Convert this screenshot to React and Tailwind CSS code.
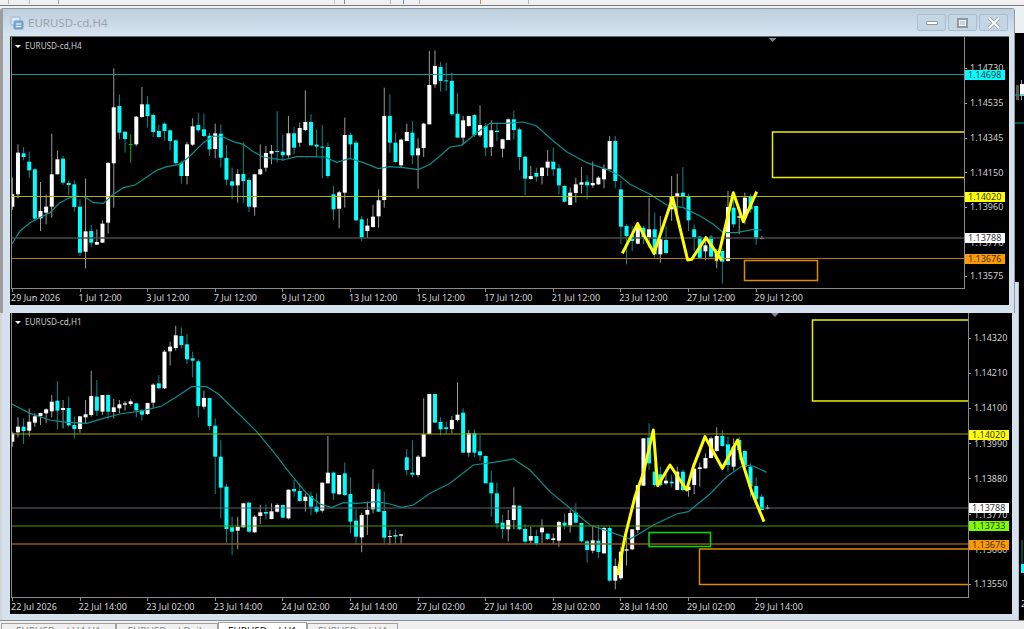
import React from "react";

// candle rows are read off the chart: kind + wickTop,bodyTop,bodyBottom,wickBottom
// values are 3x pixels relative to the y offset given to parseRows
const H4_ROWS = `
w350,400,437,447 w250,275,400,412 c258,277,288,298 c272,302,328,350 c322,325,473,478 w363,450,472,510
w400,437,455,490 w218,340,437,470 w268,295,340,340 c285,293,365,372 c358,366,372,402 c358,370,438,452
c415,437,575,585 w352,511,572,622 c492,510,545,558 w505,543,551,551 w478,488,545,545 w303,306,485,518
w22,139,307,440 c100,135,215,235 c212,212,234,275 g220,249,251,305 w165,167,250,255 w78,130,168,170
c105,130,165,200 c158,162,213,228 c192,210,228,232 c185,188,210,238 c205,208,240,268 c238,238,306,310
c300,305,345,368 w243,250,345,370 w172,196,251,255 c155,192,208,215 c158,205,225,228 c215,224,265,285
w188,217,264,292 c190,218,290,320 c252,291,356,372 c320,361,374,415 w325,339,373,425 c245,339,360,425
c350,357,437,453 w338,340,439,464 w250,325,340,342 w255,276,320,332 w252,270,278,310 c150,270,273,305
c222,272,283,300 w165,217,283,290 c198,217,260,280 w185,201,245,258 w88,183,207,210 c160,183,253,255
c205,251,257,290 c192,257,260,352 c245,258,345,352 c375,400,445,478 w390,394,443,502 w170,222,395,440
c215,222,250,290 c238,245,478,480 c465,475,530,540 w472,494,510,532 w432,467,498,500 w385,418,466,500
w80,165,417,440 c100,165,245,275 c215,245,303,305 w232,236,313,320 w188,213,240,240 c180,215,283,310
w232,262,283,383 w185,188,261,288 w-30,72,190,190 w-32,15,70,80 c3,18,60,92 c5,58,61,90
c35,60,160,165 c95,158,230,230 w165,178,230,250 w165,165,195,197 c160,162,222,228 w133,192,223,228
c185,195,260,285 w178,208,258,285 c188,209,213,240 w233,235,263,290 w172,175,237,237 c148,175,207,235
c200,205,288,328 c285,287,353,402 w315,345,354,356 c320,336,347,362 w318,320,345,370 w267,302,320,345
c260,302,325,345 c310,322,373,400 c373,375,422,425 w380,395,432,432 w350,370,396,425 w318,364,371,398
c343,362,373,415 w302,366,373,380 w345,350,370,372 w310,323,355,382 w225,240,325,325 c225,240,360,380
c360,385,497,550 c490,495,525,610 c495,522,540,570 w490,498,548,550 c495,500,528,550 w410,505,530,560
c455,505,580,590 w465,535,580,605 c495,537,576,580 w345,405,445,480 w338,397,407,480 c318,395,405,440
c398,408,478,510 c490,505,528,570 c525,527,590,595 w535,553,571,598 c522,527,587,590 w565,570,590,622
c562,570,602,668 w390,438,600,602 c395,440,490,500 w440,466,470,520 w395,410,470,490 c400,405,445,455
c435,435,533,552 w525,531,533,535`;

const H1_ROWS_A = `
w335,340,365,380 w292,320,337,352 c295,320,333,372 w265,305,332,350 w280,289,308,320 w278,279,288,315
w265,268,280,310 w225,245,274,292 c183,242,272,328 w240,264,270,325 c230,264,316,320 c290,315,327,355
w288,289,327,338 w240,283,292,310 w152,228,285,290 c180,230,272,288 w225,225,275,285 c225,225,275,298
w237,262,276,295 w240,253,265,280 w243,250,254,272 w238,244,252,258 c248,250,271,292 c268,271,284,302
w248,249,282,285 w190,194,248,262 c165,190,205,207 w90,95,205,207 w65,80,94,137 w17,46,84,92
c22,48,75,85 c42,73,118,132 c95,115,122,172 c118,124,258,292 w212,234,260,268 c233,234,318,330
c295,317,410,522 c360,410,503,595 c492,500,627,668 c590,622,635,705 w590,621,632,688 w548,550,622,622
c545,548,635,638 w585,590,637,638 w555,577,588,612 c553,576,581,598 w550,574,597,598 w550,555,575,578
c555,555,593,595 w508,509,595,598 c480,507,514,530 c490,513,543,545 w520,530,543,575 c515,528,560,585
c520,560,575,582 w487,488,572,578 w348,458,490,490 c455,458,520,540 w465,465,523,525 c427,460,525,528
c472,522,605,640 c568,602,650,675 w578,585,652,697 w545,570,584,645 w448,507,568,580 c490,508,575,576
c515,573,653,670 w630,648,651,675`;

const H1_ROWS_B = `
c478,495,500,522 w492,493,497,522 c237,262,300,316 c210,308,314,322 w255,260,315,322 w85,193,260,262
w72,72,192,192 c72,72,158,158 c142,156,178,196 c155,172,177,192 w138,150,177,190 w37,134,150,155
c115,128,248,248 w180,190,248,260 c178,190,248,262 c195,244,256,272 c256,258,340,340 c303,338,370,440
c338,370,460,475 c435,458,477,507 w420,450,478,515 w352,406,450,478 c407,407,478,480 c462,477,515,522
w470,498,512,522 c480,498,522,527 w448,473,487,522 c490,491,507,510 w490,505,510,522 w452,456,512,530
c430,458,467,478 w420,429,466,488 c400,428,458,460 c458,459,514,517 c510,514,540,578 w468,511,542,550
c465,512,546,565 w470,474,550,550 c470,474,632,635 w565,588,632,658 w530,545,625,630 w490,538,542,587
w478,478,538,540 w345,345,480,490 w205,205,347,347 c160,203,280,300 c280,305,345,350 c290,313,345,350
w310,332,340,345 c315,335,340,352 w290,305,360,360 c298,305,360,365 w330,350,360,380 w295,296,345,372
w278,292,297,350 w250,264,295,296 w200,205,264,265 w172,198,243,245 c180,198,228,230 c200,223,285,305
w205,230,290,302 c200,210,240,270 c240,243,290,295 c280,290,350,380 c322,348,388,392 c372,380,420,420
w405,413,416,418`;

const parseRows = (text, offsetY) =>
  text.trim().split(/\s+/).map((t) => {
    const [wt, bt, bb, wb] = t.slice(1).split(",").map((n) => offsetY + Number(n) / 3);
    return { kind: t[0], wt, bt, bb, wb };
  });

// zoomed points -> page coordinates
const pts = (list, ox, oy) => list.map(([x, y]) => `${ox + x / 3},${oy + y / 3}`).join(" ");

const H4_MA =
  pts([[5,550],[30,510],[60,485],[85,472],[120,455],[150,425],[175,412],[200,405],[225,408],[250,425],[280,427],[310,400],[340,380],[375,372],[405,352],[440,328],[470,317],[510,310],[540,285],[580,245],[610,225],[640,228],[670,242],[700,250],[730,272],[760,288],[790,293],[820,297],[860,287],[900,287],[945,288],[980,304],[1020,292],[1060,305],[1105,323],[1140,317]], 10, 60) +
  " " +
  pts([[40,320],[85,326],[120,310],[150,285],[180,258],[215,253],[260,215],[300,187],[340,187],[400,183],[440,195],[490,240],[530,272],[590,305],[650,325],[690,345],[720,370],[780,400],[830,432],[880,440],[930,465],[970,490],[1000,515],[1040,515],[1090,505],[1115,507]], 390, 60);

const H1_MA =
  pts([[5,252],[60,280],[120,300],[170,307],[230,310],[280,295],[330,282],[400,272],[455,258],[500,230],[545,200],[590,200],[625,222],[690,285],[740,335],[790,395],[840,460],[890,520],[930,552],[965,563],[1000,548],[1040,550],[1100,545],[1140,552]], 10, 320) +
  " " +
  pts([[35,412],[70,405],[120,370],[180,340],[250,285],[310,277],[370,267],[420,300],[480,365],[540,415],[600,465],[650,482],[720,507],[750,490],[790,465],[860,432],[895,425],[960,372],[1010,320],[1060,285],[1090,288],[1130,307]], 390, 370);

const CANDLE_COLORS = {
  w: { body: "#ffffff", wick: "#9a9a9a" },
  c: { body: "#00ffff", wick: "#0a8a8a" },
  g: { body: "#00c000", wick: "#00b000" },
};

const TOP_CHART = {
  title: "EURUSD-cd,H4",
  box: { left: 10, top: 36, width: 999, height: 269 },
  plot: { right: 964, bottom: 288, top: 37 },
  candles: parseRows(H4_ROWS, 60),
  ma: H4_MA,
  hlines: [
    { y: 73.5, color: "#109a9a" },
    { y: 195.5, color: "#b4b400" },
    { y: 237, color: "#4a4a4a", w: 1.4 },
    { y: 257.5, color: "#b27a10" },
  ],
  rects: [
    { x1: 772.5, y1: 131, x2: 964, y2: 176.5, color: "#eeee00", open: true },
    { x1: 744.5, y1: 259.5, x2: 817.5, y2: 279.5, color: "#e08a00" },
  ],
  zigzags: [
    pts([[697,577],[743,488],[792,577],[848,410],[893,597],[905,595],[948,530],[995,598]], 390, 60),
    pts([[978,600],[990,565],[1030,395],[1060,482],[1100,392]], 390, 60),
  ],
  prices: [
    ["1.14730", 67], ["1.14535", 102], ["1.14345", 137], ["1.14150", 171.5],
    ["1.13960", 206], ["1.13770", 241.5], ["1.13575", 275],
  ],
  tags: [
    ["1.14698", 74, "bg-[#00ffff]"],
    ["1.14020", 196, "bg-[#ffff00]"],
    ["1.13788", 237, "bg-white"],
    ["1.13676", 258, "bg-[#ff9900]"],
  ],
  times: ["29 Jun 2026", "1 Jul 12:00", "3 Jul 12:00", "7 Jul 12:00", "9 Jul 12:00", "13 Jul 12:00", "15 Jul 12:00", "17 Jul 12:00", "21 Jul 12:00", "23 Jul 12:00", "27 Jul 12:00", "29 Jul 12:00"],
  marker: 772.5,
};

const BOTTOM_CHART = {
  title: "EURUSD-cd,H1",
  box: { left: 10, top: 313, width: 1002, height: 301 },
  plot: { right: 968, bottom: 597, top: 313 },
  candles: [...parseRows(H1_ROWS_A, 320), ...parseRows(H1_ROWS_B, 370)],
  ma: H1_MA,
  hlines: [
    { y: 434, color: "#a3a300", w: 1.2 },
    { y: 508, color: "#5c6670" },
    { y: 526, color: "#4a9c00", w: 1 },
    { y: 544, color: "#8f5a10", w: 1.4 },
  ],
  rects: [
    { x1: 812.5, y1: 320, x2: 968, y2: 401, color: "#eeee00", open: true },
    { x1: 699.5, y1: 549, x2: 968, y2: 584.5, color: "#e08a00", open: true },
    { x1: 649, y1: 532.5, x2: 710.5, y2: 546.5, color: "#00e000" },
  ],
  zigzags: [
    pts([[683,615],[705,500],[735,380],[760,310],[790,180],[803,347],[840,285],[890,360],[910,290],[945,200],[997,295],[1043,210],[1055,270],[1085,365],[1122,455]], 390, 370),
  ],
  prices: [
    ["1.14320", 338], ["1.14210", 373], ["1.14100", 408], ["1.13990", 443.5],
    ["1.13880", 478.5], ["1.13770", 514.5], ["1.13660", 549.5], ["1.13550", 584],
  ],
  tags: [
    ["1.14020", 434.5, "bg-[#ffff00]"],
    ["1.13788", 508, "bg-white"],
    ["1.13733", 526, "bg-[#7cfc00]"],
    ["1.13676", 544.5, "bg-[#ff9900]"],
  ],
  times: ["22 Jul 2026", "22 Jul 14:00", "23 Jul 02:00", "23 Jul 14:00", "24 Jul 02:00", "24 Jul 14:00", "27 Jul 02:00", "27 Jul 14:00", "28 Jul 02:00", "28 Jul 14:00", "29 Jul 02:00", "29 Jul 14:00"],
  marker: 775,
};

function PlotDrawing({ chart }) {
  const { box, plot } = chart;
  return (
    <svg
      className="absolute inset-0"
      width={box.width}
      height={box.height}
      viewBox={`${box.left} ${box.top} ${box.width} ${box.height}`}
    >
      <defs>
        <clipPath id={`clip-${chart.title}`}>
          <rect x="12" y={plot.top} width={plot.right - 12} height={plot.bottom - plot.top} />
        </clipPath>
      </defs>
      <g clipPath={`url(#clip-${chart.title})`}>
        {chart.candles.map((c, i) => {
          const x = 12.33 + i * 5.635;
          const col = CANDLE_COLORS[c.kind];
          return (
            <g key={i}>
              <line x1={x} x2={x} y1={c.wt} y2={c.wb} stroke={col.wick} strokeWidth="1" />
              <rect x={x - 2} y={c.bt} width="4" height={Math.max(c.bb - c.bt, 1)} fill={col.body} />
            </g>
          );
        })}
        <polyline points={chart.ma} fill="none" stroke="#0b8f8f" strokeWidth="1.2" />
        {chart.hlines.map((l) => (
          <line key={l.y} x1="12" x2={plot.right} y1={l.y} y2={l.y} stroke={l.color} strokeWidth={l.w || 1} />
        ))}
        {chart.rects.map((r) => (
          <path
            key={r.x1}
            d={
              r.open
                ? `M${r.x2} ${r.y1}H${r.x1}V${r.y2}H${r.x2}`
                : `M${r.x1} ${r.y1}H${r.x2}V${r.y2}H${r.x1}Z`
            }
            fill="none"
            stroke={r.color}
            strokeWidth="1.5"
          />
        ))}
        {chart.zigzags.map((p) => (
          <polyline key={p} points={p} fill="none" stroke="#ffff00" strokeWidth="3" strokeLinejoin="round" />
        ))}
      </g>
      <path d={`M${chart.marker - 4} ${plot.top}H${chart.marker + 4}L${chart.marker} ${plot.top + 4}Z`} fill="#7d8794" />
    </svg>
  );
}

function ChartPanel({ chart, className }) {
  const { box, plot } = chart;
  return (
    <div
      className={`relative bg-black flex flex-col shrink-0 ${className}`}
      style={{ width: box.width, height: box.height }}
    >
      <div className="flex-1 min-h-0 flex">
        <div className="ml-px border-l border-r border-b border-[#8a8a8a]" style={{ width: plot.right - box.left }} />
      </div>
      <div className="flex pl-[2px] shrink-0" style={{ height: box.top + box.height - plot.bottom - 1 }}>
        {chart.times.map((t) => (
          <div key={t} className="w-[67.6px] shrink-0 flex flex-col">
            <div className="w-px h-[3px] bg-[#8a8a8a]" />
            <span className="text-[9px] leading-[11px] -ml-[1px] text-[#d4d4d4] whitespace-nowrap">{t}</span>
          </div>
        ))}
      </div>

      <PlotDrawing chart={chart} />

      <div className="absolute left-[5px] top-[4px] flex items-center gap-[3px]">
        <div className="w-0 h-0 border-l-[3px] border-r-[3px] border-t-[3px] border-l-transparent border-r-transparent border-t-white" />
        <span className="text-[8.2px] leading-[10px] text-[#c8c8c8] ml-[1px]">{chart.title}</span>
      </div>

      {chart.prices.map(([label, y]) => (
        <div
          key={label}
          className="absolute flex items-center gap-[3px] h-[10px]"
          style={{ left: plot.right - box.left + 1, top: y - box.top - 5 }}
        >
          <div className="w-[2px] h-px bg-[#a0a0a0]" />
          <span className="text-[9px] leading-[10px] text-[#d0d0d0]">{label}</span>
        </div>
      ))}
      {chart.tags.map(([label, y, bg]) => (
        <div
          key={label + y}
          className={`absolute w-[40px] h-[10px] pl-[3px] text-[9px] leading-[10px] text-[#333333] ${bg}`}
          style={{ left: plot.right - box.left + 1, top: y - box.top - 5 }}
        >
          {label}
        </div>
      ))}
    </div>
  );
}

function WindowButton({ children }) {
  return (
    <div className="w-[29px] h-[17px] rounded-[2px] border border-[#a8bdd1] bg-[#c4d5e4] flex items-center justify-center">
      {children}
    </div>
  );
}

function TopWindow() {
  return (
    <div className="absolute left-0 top-[2px] w-[1015px] h-[305px] flex flex-col border-l-[3px] border-l-[#9c9c9c] border-t border-r border-t-[#8f9aa5] border-r-[#8f9aa5] rounded-t-[3px] bg-[#d5e2ee]">
      <div className="h-[27px] shrink-0 flex items-center pl-[7px] pr-[6px] bg-gradient-to-b from-[#bccddc] to-[#d7e5f1]">
        <svg width="14" height="14" viewBox="0 0 14 14" className="mr-[4px]">
          <rect x="1" y="1" width="9" height="8" rx="1" fill="#dfeaf5" stroke="#8eb4d8" />
          <rect x="4" y="5" width="9" height="8" rx="1" fill="#7fa9d2" stroke="#6a98c6" />
          <path d="M6 8h5M6 10.5h5" stroke="#ffffff" />
        </svg>
        <span className="text-[11.5px] text-[#9aa3ab]">EURUSD-cd,H4</span>
        <div className="ml-auto flex gap-[2px]">
          <WindowButton>
            <div className="w-[12px] h-[4px] rounded-[1px] bg-white border border-[#8d98a3]" />
          </WindowButton>
          <WindowButton>
            <div className="w-[11px] h-[10px] bg-[#eef3f8] border-2 border-[#8d98a3] flex items-center justify-center">
              <div className="w-[5px] h-[4px] bg-[#c4d5e4]" />
            </div>
          </WindowButton>
          <WindowButton>
            <svg width="14" height="12" viewBox="0 0 14 12">
              <path d="M2 1l10 10M12 1L2 11" stroke="#8d98a3" strokeWidth="3.4" />
              <path d="M2 1l10 10M12 1L2 11" stroke="#ffffff" strokeWidth="2" />
            </svg>
          </WindowButton>
        </div>
      </div>
      <ChartPanel chart={TOP_CHART} className="ml-[7px] border-t border-[#6b6b6b]" />
    </div>
  );
}

function BottomWindow() {
  return (
    <div className="relative w-[1019px] h-[338px] mt-auto flex flex-col justify-end pl-[2px] pr-[7px] pb-[6px] bg-[#d5e1ec] border-l-2 border-[#d2d6da] border-r border-r-[#b4bcc4]">
      <ChartPanel chart={BOTTOM_CHART} className="ml-[6px]" />
    </div>
  );
}

function SideStrip() {
  // sliver of the next chart window, behind the two windows
  return (
    <div className="absolute left-[1015px] right-0 top-[27px] bottom-0 bg-black overflow-hidden">
      <svg className="absolute inset-0" width="9" height="587" viewBox="1015 33 9 587">
        <rect x="1016" y="85" width="3" height="15" fill="#555555" />
        <line x1="1021.5" x2="1021.5" y1="80" y2="100" stroke="#9a9a9a" />
        <rect x="1020" y="84" width="4" height="12" fill="#ffffff" />
        <line x1="1015" x2="1024" y1="95" y2="95" stroke="#109a9a" />
        <line x1="1015" x2="1024" y1="123" y2="123" stroke="#109a9a" />
        <line x1="1022" x2="1022" y1="540" y2="565" stroke="#0a8a8a" />
        <rect x="1021" y="564" width="3" height="9" fill="#00ffff" />
      </svg>
      <span className="absolute left-[6px] top-[566px] text-[9px] leading-[10px] text-[#d0d0d0]">2</span>
    </div>
  );
}

const TOOL_MARKS = [
  [8, "#b8b8b8"], [20, "#b8b8b8"], [28, "#a0a0a0"], [275, "#c8c8c8"], [9, "#888888"],
  [45, "#b0b0b0"], [12, "#5b8fd0"], [15, "#b8b8b8"], [60, "#d09040"], [47, "#b8b8b8"],
];

function Toolbar() {
  return (
    <div className="h-[6px] shrink-0 bg-[#f0f0f0] border-b border-[#7a7a7a] flex items-start">
      {TOOL_MARKS.map(([gap, color], i) => (
        <div key={i} className="flex items-start">
          <div style={{ width: gap }} />
          <div className="w-px h-[4px]" style={{ backgroundColor: color }} />
        </div>
      ))}
    </div>
  );
}

const TABS = [
  { label: "EURUSD-cd,H4,H1", w: "w-[115px]" },
  { label: "EURUSD-cd,Daily", w: "w-[102px]" },
  { label: "EURUSD-cd,H1", w: "w-[89px]", active: true },
  { label: "EURUSD-cd,H4", w: "w-[91px]" },
];

function TabBar() {
  return (
    <div className="h-[9px] shrink-0 bg-[#f0f0f0] border-t border-[#8c8c8c] flex items-end pl-[1px] overflow-hidden">
      {TABS.map((t) => (
        <div
          key={t.label}
          className={`${t.w} shrink-0 border-l border-t border-r border-[#a0a0a0] text-center text-[10px] overflow-hidden whitespace-nowrap ${
            t.active
              ? "bg-white text-[#222222] h-[7px] leading-[17px]"
              : "bg-[#f0f0f0] text-[#8a8a8a] h-[6px] leading-[15px]"
          }`}
        >
          {t.label}
        </div>
      ))}
    </div>
  );
}

export default function App() {
  return (
    <div className="w-[1024px] h-[629px] relative overflow-hidden flex flex-col bg-[#eef1f4] font-['Noto_Sans',sans-serif]">
      <Toolbar />
      <div className="flex-1 min-h-0 relative flex">
        <SideStrip />
        <BottomWindow />
        <TopWindow />
      </div>
      <TabBar />
    </div>
  );
}
